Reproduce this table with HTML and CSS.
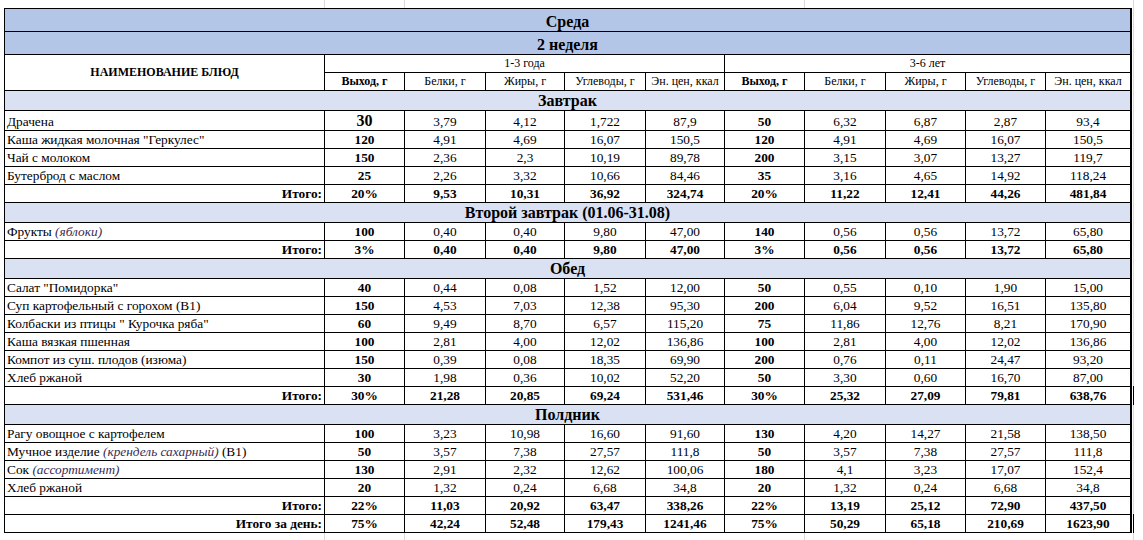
FILE: index.html
```html
<!DOCTYPE html>
<html lang="ru">
<head>
<meta charset="utf-8">
<title>Среда — 2 неделя</title>
<link rel="stylesheet" href="styles.css">
</head>
<body>
<div class="sheet">
  <div class="c band full">Среда</div>
  <div class="c band full">2 неделя</div>

  <div class="c head-name">НАИМЕНОВАНИЕ БЛЮД</div>
  <div class="c hdr span5">1-3 года</div>
  <div class="c hdr span5 last">3-6 лет</div>
  <div class="c hdr b">Выход, г</div>
  <div class="c hdr">Белки, г</div>
  <div class="c hdr">Жиры, г</div>
  <div class="c hdr">Углеводы, г</div>
  <div class="c hdr">Эн. цен, ккал</div>
  <div class="c hdr b">Выход, г</div>
  <div class="c hdr">Белки, г</div>
  <div class="c hdr">Жиры, г</div>
  <div class="c hdr">Углеводы, г</div>
  <div class="c hdr last">Эн. цен, ккал</div>

  <div class="c sec full">Завтрак</div>

  <div class="c name">Драчена</div>
  <div class="c b big">30</div><div class="c">3,79</div><div class="c">4,12</div><div class="c">1,722</div><div class="c">87,9</div>
  <div class="c b">50</div><div class="c">6,32</div><div class="c">6,87</div><div class="c">2,87</div><div class="c last">93,4</div>

  <div class="c name">Каша жидкая молочная "Геркулес"</div>
  <div class="c b">120</div><div class="c">4,91</div><div class="c">4,69</div><div class="c">16,07</div><div class="c">150,5</div>
  <div class="c b">120</div><div class="c">4,91</div><div class="c">4,69</div><div class="c">16,07</div><div class="c last">150,5</div>

  <div class="c name">Чай с молоком</div>
  <div class="c b">150</div><div class="c">2,36</div><div class="c">2,3</div><div class="c">10,19</div><div class="c">89,78</div>
  <div class="c b">200</div><div class="c">3,15</div><div class="c">3,07</div><div class="c">13,27</div><div class="c last">119,7</div>

  <div class="c name">Бутерброд с маслом</div>
  <div class="c b">25</div><div class="c">2,26</div><div class="c">3,32</div><div class="c">10,66</div><div class="c">84,46</div>
  <div class="c b">35</div><div class="c">3,16</div><div class="c">4,65</div><div class="c">14,92</div><div class="c last">118,24</div>

  <div class="c name tot">Итого:</div>
  <div class="c b">20%</div><div class="c b">9,53</div><div class="c b">10,31</div><div class="c b">36,92</div><div class="c b">324,74</div>
  <div class="c b">20%</div><div class="c b">11,22</div><div class="c b">12,41</div><div class="c b">44,26</div><div class="c b last">481,84</div>

  <div class="c sec full">Второй завтрак (01.06-31.08)</div>

  <div class="c name">Фрукты&nbsp;<i class="note">(яблоки)</i></div>
  <div class="c b">100</div><div class="c">0,40</div><div class="c">0,40</div><div class="c">9,80</div><div class="c">47,00</div>
  <div class="c b">140</div><div class="c">0,56</div><div class="c">0,56</div><div class="c">13,72</div><div class="c last">65,80</div>

  <div class="c name tot">Итого:</div>
  <div class="c b">3%</div><div class="c b">0,40</div><div class="c b">0,40</div><div class="c b">9,80</div><div class="c b">47,00</div>
  <div class="c b">3%</div><div class="c b">0,56</div><div class="c b">0,56</div><div class="c b">13,72</div><div class="c b last">65,80</div>

  <div class="c sec full">Обед</div>

  <div class="c name">Салат "Помидорка"</div>
  <div class="c b">40</div><div class="c">0,44</div><div class="c">0,08</div><div class="c">1,52</div><div class="c">12,00</div>
  <div class="c b">50</div><div class="c">0,55</div><div class="c">0,10</div><div class="c">1,90</div><div class="c last">15,00</div>

  <div class="c name">Суп картофельный с горохом (В1)</div>
  <div class="c b">150</div><div class="c">4,53</div><div class="c">7,03</div><div class="c">12,38</div><div class="c">95,30</div>
  <div class="c b">200</div><div class="c">6,04</div><div class="c">9,52</div><div class="c">16,51</div><div class="c last">135,80</div>

  <div class="c name">Колбаски из птицы " Курочка ряба"</div>
  <div class="c b">60</div><div class="c">9,49</div><div class="c">8,70</div><div class="c">6,57</div><div class="c">115,20</div>
  <div class="c b">75</div><div class="c">11,86</div><div class="c">12,76</div><div class="c">8,21</div><div class="c last">170,90</div>

  <div class="c name">Каша вязкая пшенная</div>
  <div class="c b">100</div><div class="c">2,81</div><div class="c">4,00</div><div class="c">12,02</div><div class="c">136,86</div>
  <div class="c b">100</div><div class="c">2,81</div><div class="c">4,00</div><div class="c">12,02</div><div class="c last">136,86</div>

  <div class="c name">Компот из суш. плодов (изюма)</div>
  <div class="c b">150</div><div class="c">0,39</div><div class="c">0,08</div><div class="c">18,35</div><div class="c">69,90</div>
  <div class="c b">200</div><div class="c">0,76</div><div class="c">0,11</div><div class="c">24,47</div><div class="c last">93,20</div>

  <div class="c name">Хлеб ржаной</div>
  <div class="c b">30</div><div class="c">1,98</div><div class="c">0,36</div><div class="c">10,02</div><div class="c">52,20</div>
  <div class="c b">50</div><div class="c">3,30</div><div class="c">0,60</div><div class="c">16,70</div><div class="c last">87,00</div>

  <div class="c name tot">Итого:</div>
  <div class="c b">30%</div><div class="c b">21,28</div><div class="c b">20,85</div><div class="c b">69,24</div><div class="c b">531,46</div>
  <div class="c b">30%</div><div class="c b">25,32</div><div class="c b">27,09</div><div class="c b">79,81</div><div class="c b last edge">638,76</div>

  <div class="c sec full">Полдник</div>

  <div class="c name">Рагу овощное с картофелем</div>
  <div class="c b">100</div><div class="c">3,23</div><div class="c">10,98</div><div class="c">16,60</div><div class="c">91,60</div>
  <div class="c b">130</div><div class="c">4,20</div><div class="c">14,27</div><div class="c">21,58</div><div class="c last">138,50</div>

  <div class="c name">Мучное изделие&nbsp;<i class="note">(крендель сахарный)</i>&nbsp;(В1)</div>
  <div class="c b">50</div><div class="c">3,57</div><div class="c">7,38</div><div class="c">27,57</div><div class="c">111,8</div>
  <div class="c b">50</div><div class="c">3,57</div><div class="c">7,38</div><div class="c">27,57</div><div class="c last">111,8</div>

  <div class="c name">Сок&nbsp;<i class="note">(ассортимент)</i></div>
  <div class="c b">130</div><div class="c">2,91</div><div class="c">2,32</div><div class="c">12,62</div><div class="c">100,06</div>
  <div class="c b">180</div><div class="c">4,1</div><div class="c">3,23</div><div class="c">17,07</div><div class="c last">152,4</div>

  <div class="c name">Хлеб ржаной</div>
  <div class="c b">20</div><div class="c">1,32</div><div class="c">0,24</div><div class="c">6,68</div><div class="c">34,8</div>
  <div class="c b">20</div><div class="c">1,32</div><div class="c">0,24</div><div class="c">6,68</div><div class="c last">34,8</div>

  <div class="c name tot">Итого:</div>
  <div class="c b">22%</div><div class="c b">11,03</div><div class="c b">20,92</div><div class="c b">63,47</div><div class="c b">338,26</div>
  <div class="c b">22%</div><div class="c b">13,19</div><div class="c b">25,12</div><div class="c b">72,90</div><div class="c b last">437,50</div>

  <div class="c name tot">Итого за день:</div>
  <div class="c b">75%</div><div class="c b">42,24</div><div class="c b">52,48</div><div class="c b">179,43</div><div class="c b">1241,46</div>
  <div class="c b">75%</div><div class="c b">50,29</div><div class="c b">65,18</div><div class="c b">210,69</div><div class="c b last edge">1623,90</div>
</div>
</body>
</html>
```

FILE: styles.css
```css
html, body {
  margin: 0;
  padding: 0;
}

body {
  width: 1143px;
  height: 540px;
  overflow: hidden;
  background-color: #fff;
  background-image:
    linear-gradient(to right, transparent 324px, #d9d9d9 324px, #d9d9d9 325px, transparent 325px),
    linear-gradient(to right, transparent 404px, #d9d9d9 404px, #d9d9d9 405px, transparent 405px),
    linear-gradient(to right, transparent 804px, #d9d9d9 804px, #d9d9d9 805px, transparent 805px),
    linear-gradient(to right, transparent 1133px, #d9d9d9 1133px, #d9d9d9 1134px, transparent 1134px);
  font-family: "Liberation Serif", "Times New Roman", serif;
  color: #000;
}

.sheet {
  display: grid;
  grid-template-columns: 320px 80px 81px 79px 81px 79px 80px 81px 80px 80px 86px;
  grid-template-rows:
    23px 23px 18px 18px
    20px 20px repeat(4, 18px)
    20px repeat(2, 18px)
    20px repeat(7, 18px)
    20px repeat(6, 18px);
  width: max-content;
  margin: 8px 0 0 4px;
  border-top: 1px solid #000;
  border-left: 1px solid #000;
  background: #fff;
}

.c {
  box-sizing: border-box;
  display: flex;
  align-items: flex-end;
  justify-content: center;
  border-right: 1px solid #000;
  border-bottom: 1px solid #000;
  font-size: 13.33px;
  line-height: normal;
  white-space: nowrap;
  overflow: hidden;
  position: relative;
}

.last {
  border-right-width: 2px;
}

.full {
  grid-column: 1 / -1;
  border-right-width: 2px;
}

.band {
  background: #b4c6e7;
  font-weight: bold;
  font-size: 16px;
}

.sec {
  background: #d9e1f2;
  font-weight: bold;
  font-size: 16px;
}

.head-name {
  grid-row: span 2;
  align-items: center;
  font-weight: bold;
  font-size: 12px;
}

.hdr {
  font-size: 12px;
  padding-bottom: 1px;
}

.span5 {
  grid-column: span 5;
}

.name {
  justify-content: flex-start;
  padding-left: 2px;
}

.tot {
  justify-content: flex-end;
  padding-left: 0;
  padding-right: 2px;
  font-weight: bold;
}

.b {
  font-weight: bold;
}

.big {
  font-size: 16px;
}

.note {
  color: #3a2c52;
  font-style: italic;
}

.edge {
  overflow: visible;
}

.edge::after {
  content: "";
  position: absolute;
  top: -1px;
  bottom: -1px;
  right: -4px;
  width: 1px;
  background: #000;
}
```
